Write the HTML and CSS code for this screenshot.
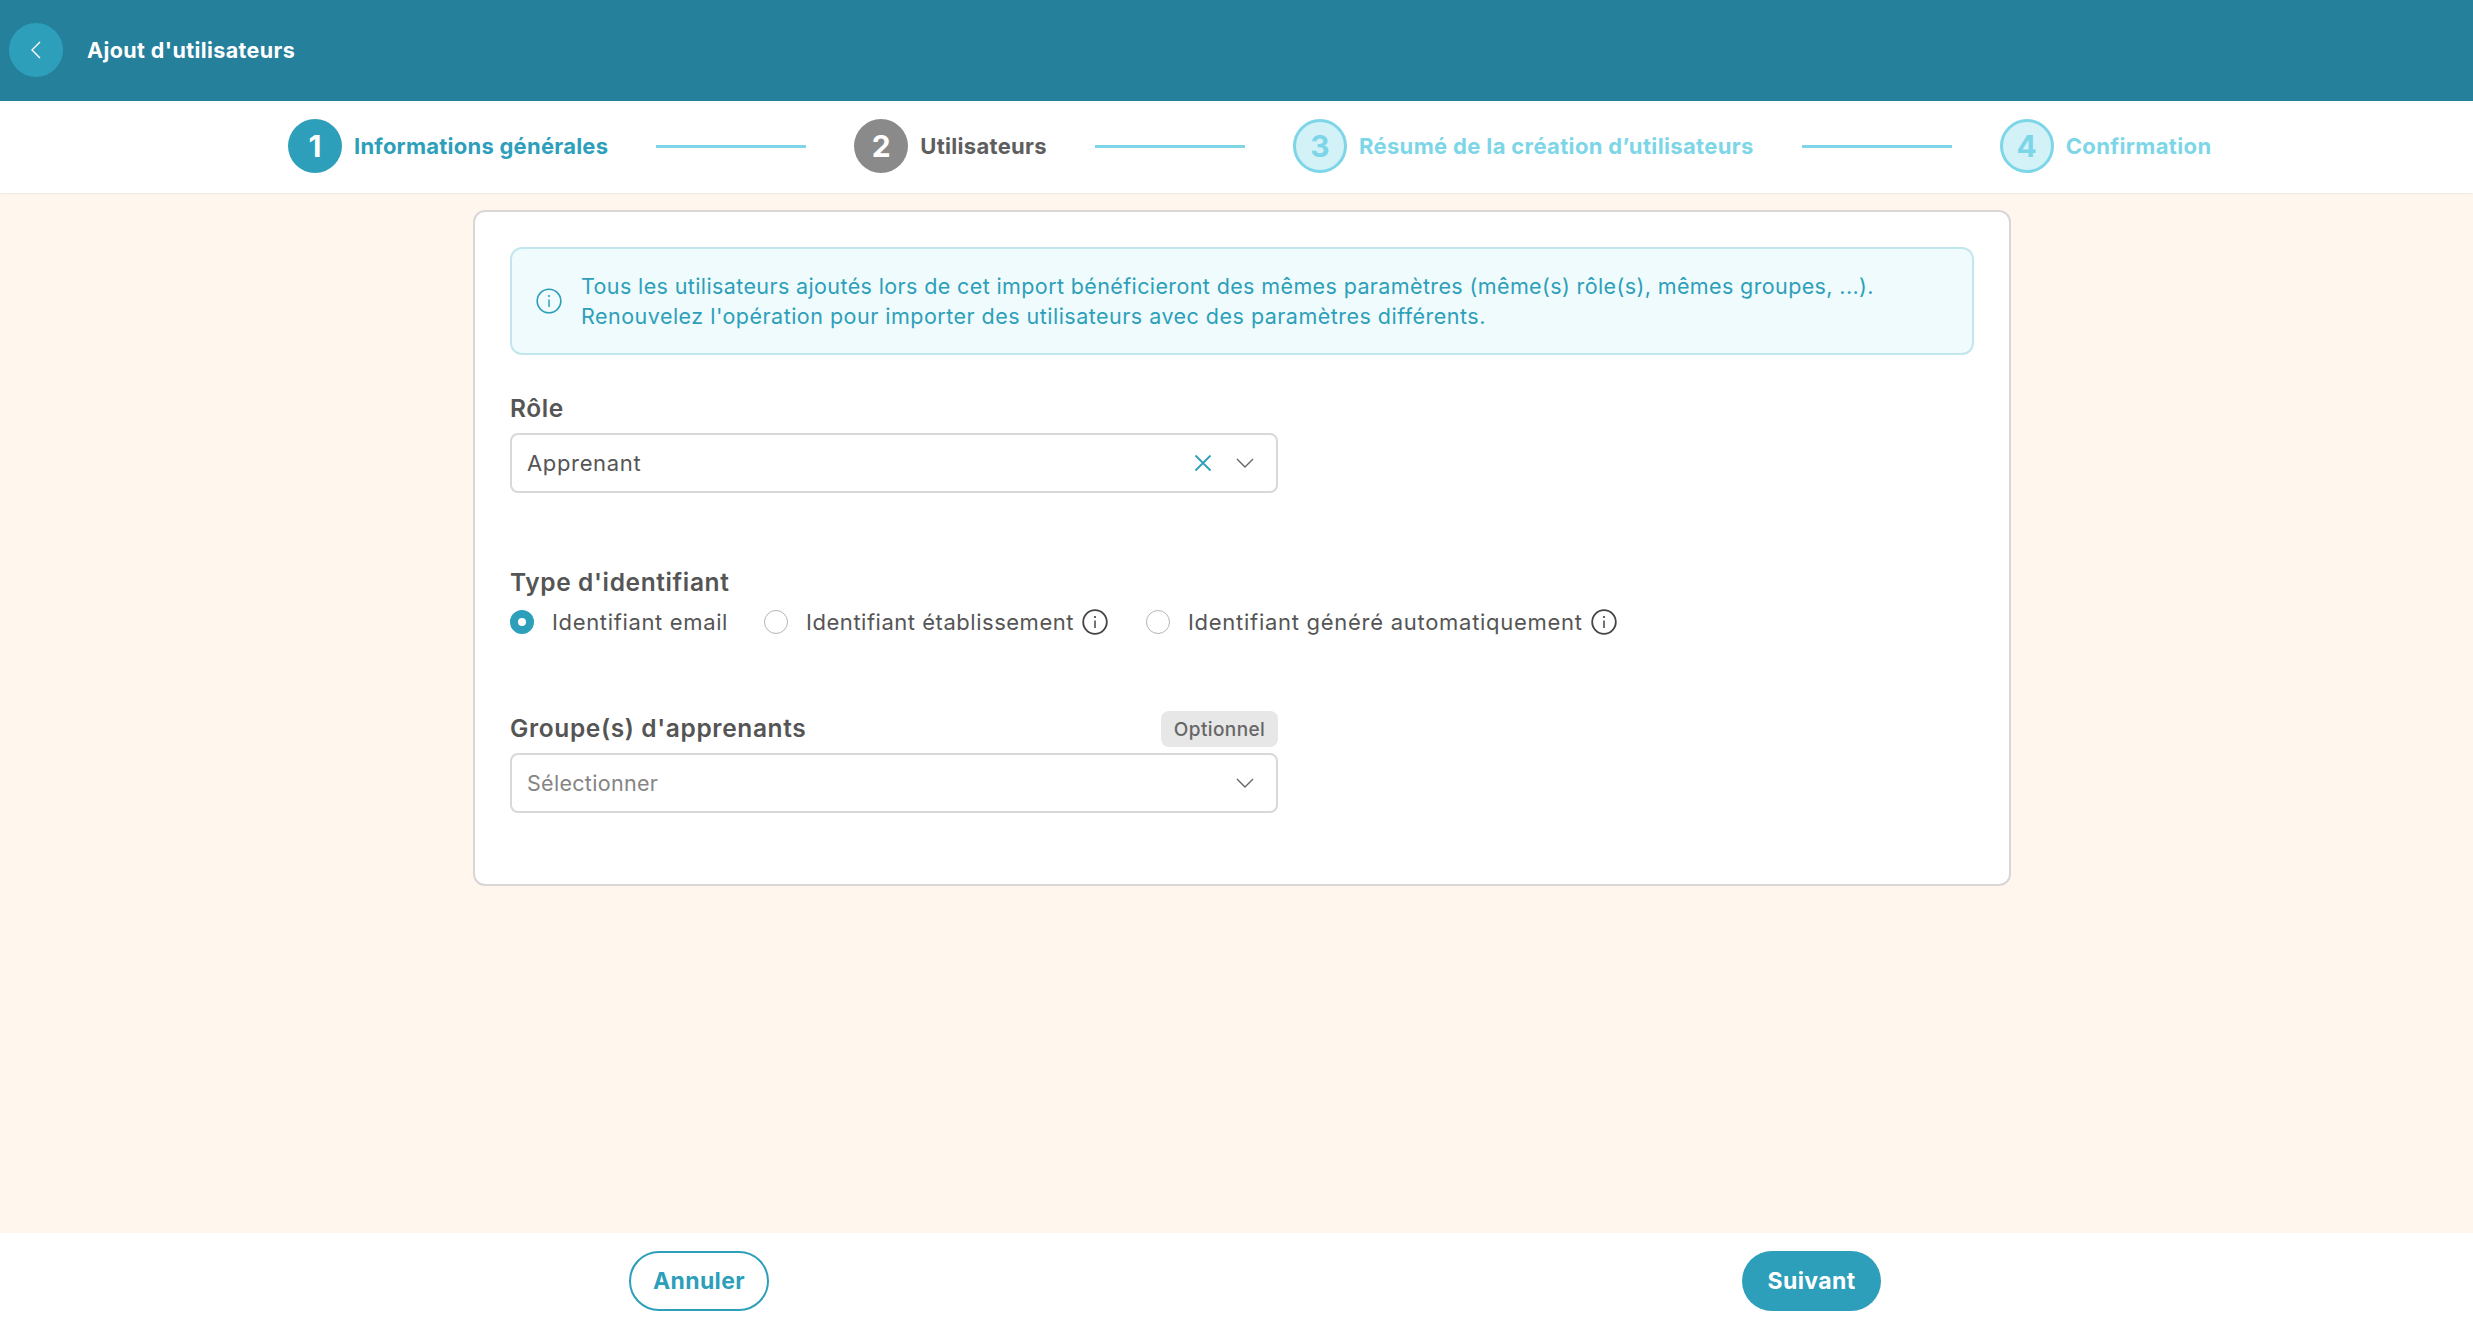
FILE: index.html
```html
<!DOCTYPE html>
<html lang="fr">
<head>
<meta charset="utf-8">
<title>Ajout d'utilisateurs</title>
<link rel="stylesheet" href="styles.css">
</head>
<body>
<div class="page">
  <header class="topbar">
    <button class="back" type="button" aria-label="Retour">
      <svg width="14" height="22" viewBox="0 0 14 22"><path d="M11 3 3 11l8 8" fill="none" stroke="#fff" stroke-width="1.4"/></svg>
    </button>
    <h1 class="title">Ajout d'utilisateurs</h1>
  </header>
  <nav class="stepper">
    <div class="step active"><span class="num">1</span><span class="step-label s1">Informations générales</span></div>
    <span class="line"></span>
    <div class="step current"><span class="num">2</span><span class="step-label s2">Utilisateurs</span></div>
    <span class="line"></span>
    <div class="step todo"><span class="num">3</span><span class="step-label s3">Résumé de la création d’utilisateurs</span></div>
    <span class="line"></span>
    <div class="step todo"><span class="num">4</span><span class="step-label s4">Confirmation</span></div>
  </nav>
  <main class="content">
    <section class="card">
      <div class="alert">
        <svg class="alert-icon" width="26" height="26" viewBox="0 0 26 26"><circle cx="13" cy="13" r="11.8" fill="none" stroke="#2d9fba" stroke-width="1.6"/><circle cx="13" cy="8" r="1.1" fill="#2d9fba"/><path d="M13 11.5v7.5" stroke="#2d9fba" stroke-width="1.5"/></svg>
        <p class="alert-text"><span class="alert-l1">Tous les utilisateurs ajoutés lors de cet import bénéficieront des mêmes paramètres (même(s) rôle(s), mêmes groupes, ...).</span><br><span class="alert-l2">Renouvelez l'opération pour importer des utilisateurs avec des paramètres différents.</span></p>
      </div>
      <div class="field role">
        <label class="label">Rôle</label>
        <div class="select">
          <span class="value">Apprenant</span>
          <svg class="clear" width="18" height="18" viewBox="0 0 18 18"><path d="M1.5 1.5l15 15M16.500 1.500l-15 15" stroke="#2d9fba" stroke-width="1.8" fill="none"/></svg>
          <svg class="chev" width="18" height="10" viewBox="0 0 18 10"><path d="M1 1l8 8 8-8" fill="none" stroke="#666" stroke-width="1.4"/></svg>
        </div>
      </div>
      <div class="field idtype">
        <label class="label">Type d'identifiant</label>
        <div class="radios">
          <div class="radio r1"><span class="dot on"></span><span class="radio-label">Identifiant email</span></div>
          <div class="radio r2"><span class="dot"></span><span class="radio-label">Identifiant établissement</span>
            <svg class="info" width="26" height="26" viewBox="0 0 26 26"><circle cx="13" cy="13" r="11.8" fill="none" stroke="#444" stroke-width="1.8"/><circle cx="13" cy="8" r="1.100" fill="#444"/><path d="M13 11.500v7.500" stroke="#444" stroke-width="1.500"/></svg></div>
          <div class="radio r3"><span class="dot"></span><span class="radio-label">Identifiant généré automatiquement</span>
            <svg class="info" width="26" height="26" viewBox="0 0 26 26"><circle cx="13" cy="13" r="11.8" fill="none" stroke="#444" stroke-width="1.8"/><circle cx="13" cy="8" r="1.100" fill="#444"/><path d="M13 11.500v7.500" stroke="#444" stroke-width="1.500"/></svg></div>
        </div>
      </div>
      <div class="field groups">
        <div class="label-row"><label class="label">Groupe(s) d'apprenants</label><span class="badge">Optionnel</span></div>
        <div class="select">
          <span class="value placeholder">Sélectionner</span>
          <svg class="chev" width="18" height="10" viewBox="0 0 18 10"><path d="M1 1l8 8 8-8" fill="none" stroke="#666" stroke-width="1.4"/></svg>
        </div>
      </div>
    </section>
  </main>
  <footer class="footer">
    <button class="btn ghost" type="button">Annuler</button>
    <button class="btn solid" type="button">Suivant</button>
  </footer>
</div>
</body>
</html>
```
FILE: styles.css
```css
* { box-sizing: border-box; }
html, body { margin: 0; height: 100%; }
body { font-family: "Inter", "Open Sans", sans-serif; color: #555; background: #fff; }
.page { display: flex; flex-direction: column; height: 100vh; overflow: hidden; }

.topbar { flex: 0 0 101px; background: #25809c; display: flex; align-items: center; padding: 0 0 2px 9px; gap: 24px; }
.back { width: 54px; height: 54px; border-radius: 50%; border: 0; padding: 0; background: #2d9fba; display: flex; align-items: center; justify-content: center; }
.title { margin: 0; font-size: 21.5px; font-weight: 700; color: #fff; letter-spacing: .4px; }

.stepper { flex: 0 0 92px; display: flex; align-items: center; padding: 0 0 2px 288px; background: #fff; box-shadow: 0 1px 2px rgba(0,0,0,.06); position: relative; }
.step { display: flex; align-items: center; gap: 12px; }
.num { width: 54px; height: 54px; border-radius: 50%; display: flex; align-items: center; justify-content: center; font-size: 30px; font-weight: 700; }
.step-label { font-size: 22px; font-weight: 700; letter-spacing: .3px; white-space: nowrap; }
.line { width: 150px; height: 3px; background: #7dd6e8; margin: 0 48px; }
.active .num { background: #2d9fba; color: #fff; }
.active .step-label { color: #2d9fba; letter-spacing: .24px; }
.current .num { background: #8a8a8a; color: #fff; }
.current .step-label { color: #5e5e5e; letter-spacing: .3px; }
.todo .num { background: #d3f2f7; border: 3px solid #7dd6e8; color: #7dd6e8; }
.todo .step-label { color: #7dd6e8; letter-spacing: .35px; }

.content { flex: 1; background: #fff6ed; padding: 17px 462px 0 473px; min-height: 0; }
.card { background: #fff; border: 2px solid #d9d7d5; border-radius: 12px; height: 676px; padding: 35px 35px 0; }
.alert { display: flex; align-items: center; gap: 19px; height: 108px; padding-left: 24px; background: #effbfc; border: 2px solid #c2e6ee; border-radius: 12px; }
.alert-text { margin: 0; font-size: 21.5px; line-height: 30px; color: #2d9fba; }
.alert-l1 { letter-spacing: .38px; }
.alert-l2 { letter-spacing: .48px; }
.alert-icon { flex: none; }

.label { display: block; font-size: 24.5px; font-weight: 600; letter-spacing: .62px; color: #555; line-height: 28px; }
.field { width: 768px; }
.role { margin-top: 39px; }
.role .label { margin-bottom: 11px; }
.select { display: flex; align-items: center; height: 60px; border: 2px solid #d8d8d8; border-radius: 8px; padding: 0 22px 0 15px; font-size: 22px; letter-spacing: .65px; color: #555; background: #fff; }
.value { flex: 1; }
.placeholder { color: #858585; font-size: 21.5px; letter-spacing: .3px; }
.clear { margin-right: 24px; }
.idtype { width: auto; margin-top: 75px; }
.radios { display: flex; align-items: center; margin-top: 12px; height: 28px; }
.radio { display: flex; align-items: center; font-size: 22px; letter-spacing: .65px; color: #555; white-space: nowrap; }
.dot { flex: none; width: 24px; height: 24px; border-radius: 50%; border: 1px solid #b5b5b5; background: #fff; margin-right: 18px; }
.dot.on { border: 8px solid #2d9fba; }
.r1 { margin-right: 36px; }
.r2 { margin-right: 38px; letter-spacing: .52px; }
.r3 { letter-spacing: .72px; }
.info { margin-left: 8px; flex: none; }
.groups { margin-top: 75px; }
.label-row { display: flex; align-items: center; justify-content: space-between; height: 36px; margin-bottom: 6px; }
.label-row .label { margin-bottom: 2px; }
.badge { background: #e7e7e7; border-radius: 8px; height: 36px; width: 117px; display: flex; align-items: center; justify-content: center; font-size: 19px; letter-spacing: .4px; font-weight: 500; color: #666; }

.footer { flex: 0 0 93px; background: #fff; display: flex; align-items: center; justify-content: space-between; padding: 2px 592px 0 629px; }
.btn { width: 139px; height: 60px; border-radius: 30px; font-family: "Inter", sans-serif; font-size: 23px; font-weight: 700; letter-spacing: .4px; }
.ghost { width: 140px; background: #fff; border: 2px solid #2d9fba; color: #2d9fba; }
.solid { background: #2d9fba; border: 0; color: #fff; }
```
